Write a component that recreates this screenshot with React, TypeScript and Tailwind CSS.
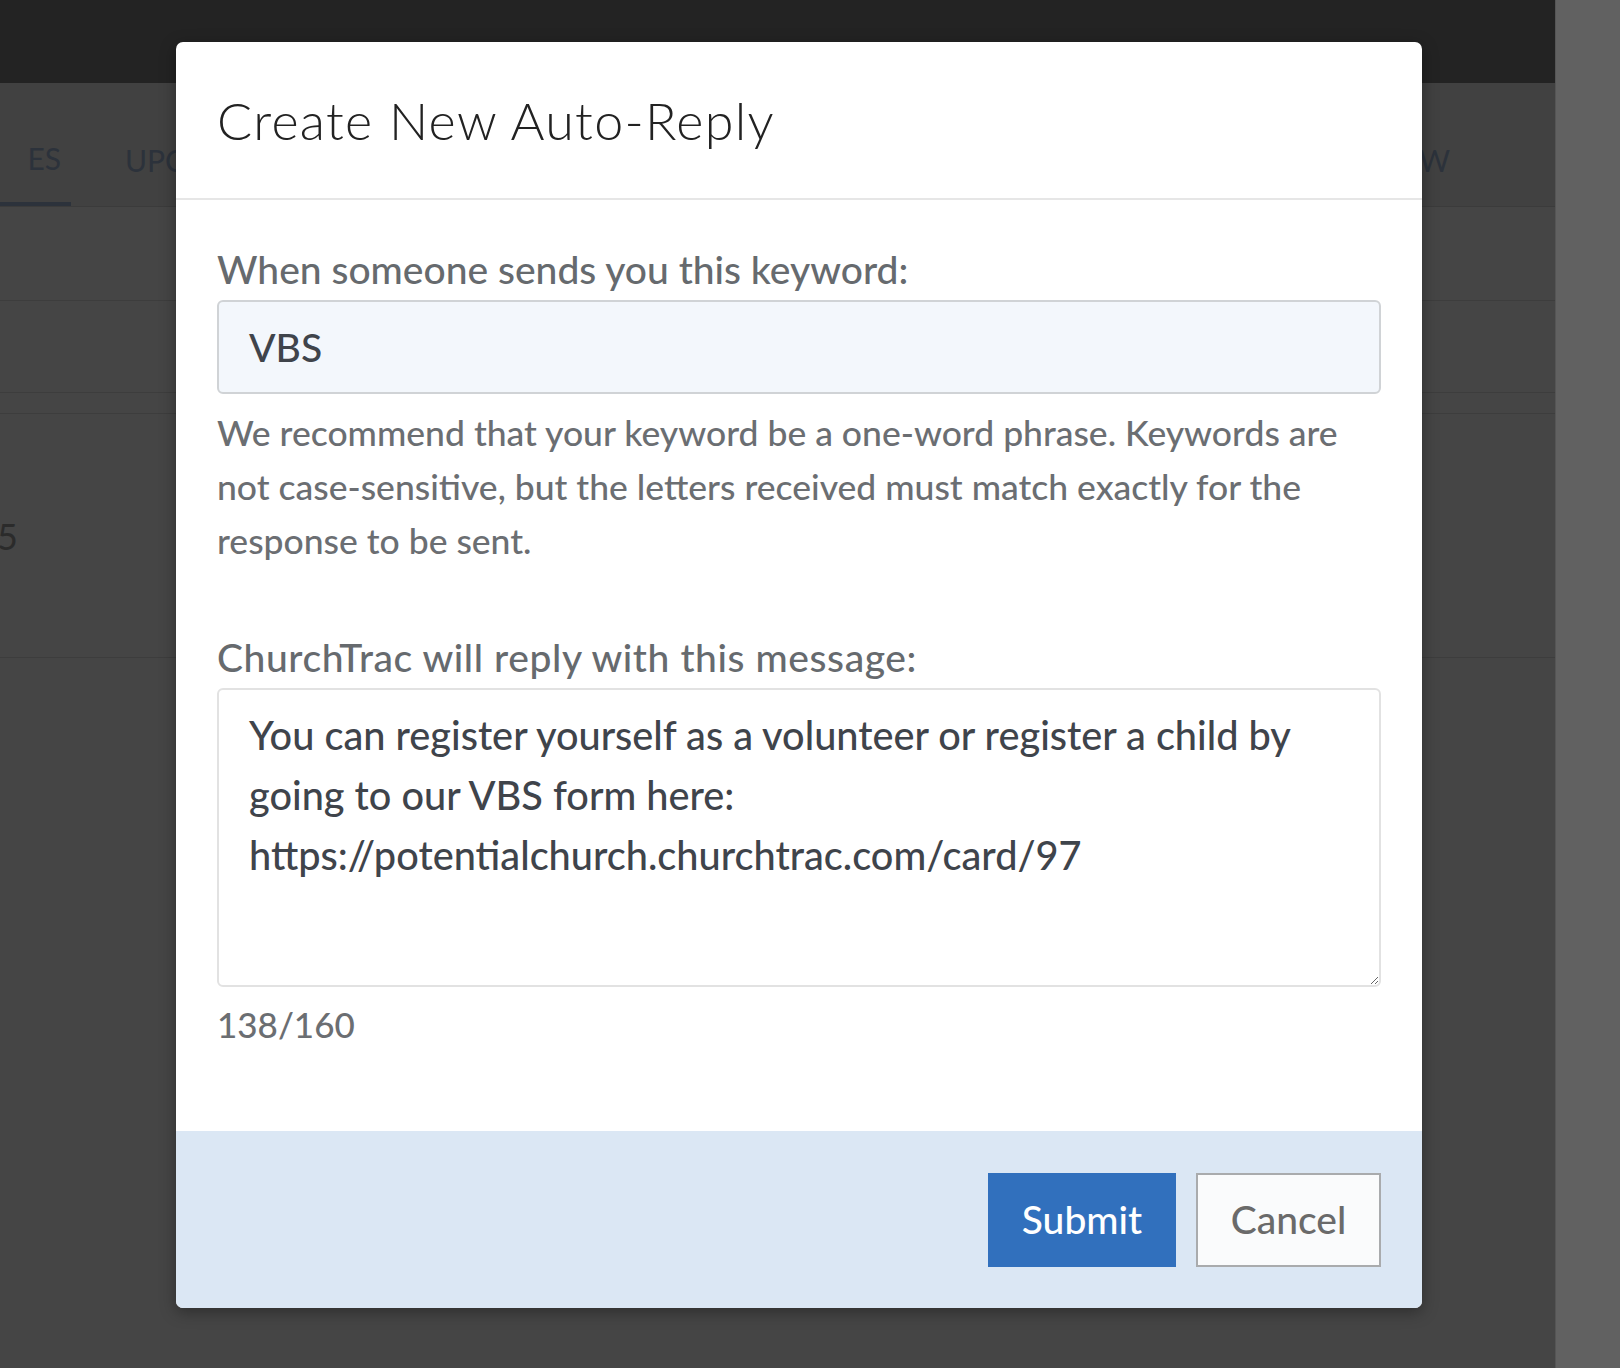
import React from "react";

const font = { fontFamily: "Lato, 'Liberation Sans', sans-serif" };

function Backdrop() {
  return (
    <div className="flex h-full w-[1555px] flex-col bg-[#454545]">
      <div className="h-[83px] bg-[#232323]" />
      <div className="flex h-[124px] items-stretch border-b border-[#3b3b3b] bg-[#414141] pt-[32px] text-[30px] text-[#2c323b]">
        <div className="flex w-[71px] items-center justify-end border-b-[4px] border-[#2c323b] pr-[10px]">
          ES
        </div>
        <div className="flex items-center pl-[54px]">UPCOMING</div>
        <div className="flex flex-1 items-center justify-end pr-[105px]">NEW</div>
      </div>
      <div className="h-[94px] border-b border-[#3d3d3d]" />
      <div className="h-[92px] border-b border-[#3d3d3d]" />
      <div className="h-[21px] border-b border-[#3d3d3d]" />
      <div className="flex h-[244px] items-center border-b border-[#3d3d3d] text-[36px] text-[#2b2b2b]">
        <span className="-ml-[3px]">5</span>
      </div>
    </div>
  );
}

export default function App() {
  return (
    <div className="relative flex h-[1368px] w-full overflow-hidden bg-[#616161]" style={font}>
      <Backdrop />
      <div className="flex-1 border-l border-[#555] bg-[#616161]" />

      <div className="absolute left-[176px] top-[42px] flex h-[1266px] w-[1246px] flex-col overflow-hidden rounded-[7px] bg-white shadow-[0_4px_16px_rgba(0,0,0,0.35)]">
        <div className="flex h-[158px] shrink-0 items-center border-b-2 border-[#e6e6e6] px-[41px]">
          <h2 className="text-[52px] font-light tracking-[0.025em] text-[#222]">Create New Auto-Reply</h2>
        </div>

        <div className="flex flex-1 flex-col px-[41px] pt-[42px]">
          <label className="text-[39px] font-medium leading-[54px] text-[#666a6e]">
            When someone sends you this keyword:
          </label>
          <div className="mt-[4px] flex h-[94px] items-center rounded-[6px] border-2 border-[#d0d3d6] bg-[#f3f7fc] px-[30px] text-[39px] font-medium text-[#3f444b]">
            VBS
          </div>
          <p className="mt-[12px] text-[35.5px] font-medium leading-[54px] text-[#6b6e72]">
            We recommend that your keyword be a one-word phrase. Keywords are not case-sensitive, but the letters
            received must match exactly for the response to be sent.
          </p>

          <label className="mt-[62px] text-[39px] font-medium leading-[54px] tracking-[0.015em] text-[#666a6e]">
            ChurchTrac will reply with this message:
          </label>
          <textarea
            readOnly
            className="mt-[4px] h-[299px] w-full rounded-[6px] border-2 border-[#e2e2e2] bg-white px-[30px] py-[15px] text-[39.7px] font-medium leading-[60px] text-[#3f444b] outline-none"
            defaultValue="You can register yourself as a volunteer or register a child by going to our VBS form here: https://potentialchurch.churchtrac.com/card/97"
          />
          <div className="mt-[12px] text-[35px] font-medium leading-[50px] text-[#6b6e72]">138/160</div>
        </div>

        <div className="flex h-[177px] shrink-0 items-center justify-end gap-[20px] bg-[#dbe7f4] px-[41px]">
          <button className="h-[94px] w-[188px] bg-[#3170bd] text-[39px] font-medium text-white">Submit</button>
          <button className="h-[94px] w-[185px] border-2 border-[#a9abad] bg-[#fafbfc] text-[39px] font-medium text-[#6a6a6a]">
            Cancel
          </button>
        </div>
      </div>
    </div>
  );
}
